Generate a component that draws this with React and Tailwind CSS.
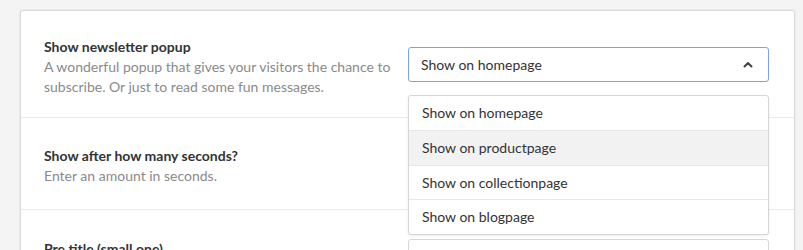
import React, { useState } from 'react';

const OPTIONS = ['Show on homepage', 'Show on productpage', 'Show on collectionpage', 'Show on blogpage'];

const FieldLabel = ({ title, description }) => (
    <div className="w-[352px] shrink-0 pt-[5px]">
        <div className="font-bold text-[#333333] leading-5">{title}</div>
        {description && <div className="text-[#8a8a8a] leading-5">{description}</div>}
    </div>
);

const App = () => {
    const [value, setValue] = useState(OPTIONS[0]);
    const [open, setOpen] = useState(true);
    const [hovered, setHovered] = useState(1);

    return (
        <div
            className="min-h-[250px] h-[250px] overflow-hidden bg-[#f4f4f4] pt-[10px] pl-[20px] text-[14px]"
            style={{ fontFamily: 'Lato, "Liberation Sans", sans-serif' }}
        >
            <div className="w-[775px] bg-white border border-[#d9d9d9] rounded-[3px] shadow-[0_0_0_1px_#ececec]">
                {/* Newsletter popup */}
                <div className="h-[107px] flex items-center px-[23px] gap-[12px] border-b border-[#ebebeb]">
                    <FieldLabel
                        title="Show newsletter popup"
                        description="A wonderful popup that gives your visitors the chance to subscribe. Or just to read some fun messages."
                    />
                    <div className="relative w-[361px] shrink-0">
                        <button
                            onClick={() => setOpen(!open)}
                            className="w-full h-[35px] flex items-center justify-between pl-[12px] pr-[15px] bg-white border border-[#7da2df] rounded-[3px] text-[#333333] text-left"
                        >
                            <span>{value}</span>
                            <svg width="10" height="7" viewBox="0 0 10 7" className="text-[#444444]">
                                <path d="M1.5 5.5 L5 2 L8.5 5.5" fill="none" stroke="currentColor" strokeWidth="2" strokeLinecap="round" strokeLinejoin="round" />
                            </svg>
                        </button>
                        {open && (
                            <div className="absolute z-10 left-0 top-[48px] w-full bg-white border border-[#d6d6d6] rounded-[3px] shadow-[0_1px_3px_rgba(0,0,0,0.08)]">
                                {OPTIONS.map((opt, i) => (
                                    <div
                                        key={opt}
                                        onMouseEnter={() => setHovered(i)}
                                        onClick={() => { setValue(opt); setOpen(false); }}
                                        className={`h-[34.5px] flex items-center pl-[13px] text-[#333333] cursor-pointer ${i > 0 ? 'border-t border-[#e8e8e8]' : ''} ${hovered === i ? 'bg-[#f2f2f2]' : ''}`}
                                    >
                                        {opt}
                                    </div>
                                ))}
                            </div>
                        )}
                    </div>
                </div>

                {/* Delay */}
                <div className="h-[92px] flex items-center px-[23px] gap-[12px] border-b border-[#ebebeb]">
                    <FieldLabel title="Show after how many seconds?" description="Enter an amount in seconds." />
                    <input
                        type="text"
                        defaultValue="5"
                        className="w-[361px] h-[35px] px-[12px] border border-[#d6d6d6] rounded-[3px] text-[#333333] outline-none"
                    />
                </div>

                {/* Pre title */}
                <div className="h-[92px] flex items-center px-[23px] gap-[12px]">
                    <FieldLabel title="Pre title (small one)" description="Shown above the main title." />
                    <input
                        type="text"
                        className="w-[361px] h-[35px] px-[12px] border border-[#d6d6d6] rounded-[3px] text-[#333333] outline-none"
                    />
                </div>
            </div>
        </div>
    );
};

export default App;
